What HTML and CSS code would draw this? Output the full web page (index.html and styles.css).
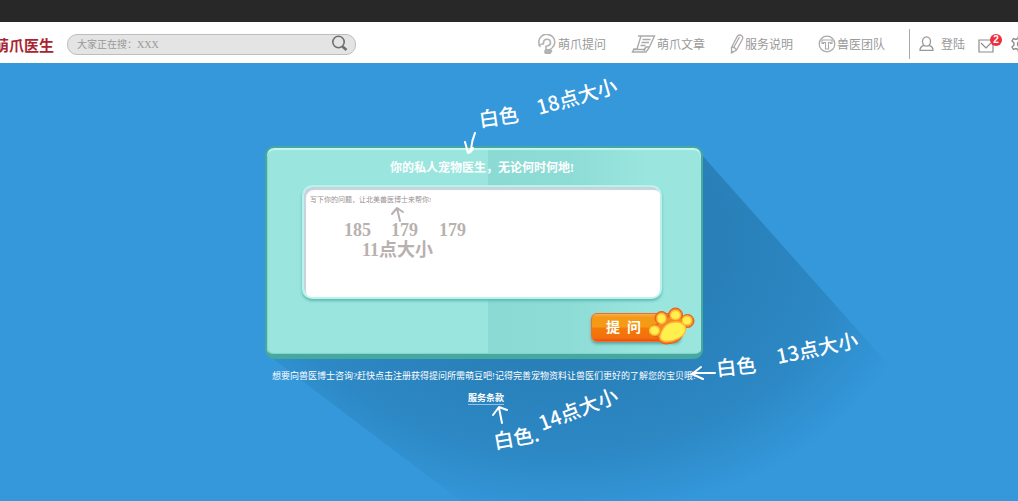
FILE: index.html
```html
<!DOCTYPE html>
<html lang="zh-CN">
<head>
<meta charset="utf-8">
<title>萌爪医生</title>
<link rel="stylesheet" href="styles.css">
</head>
<body>
<div class="topbar"></div>
<header class="header">
  <a class="logo" href="#">萌爪医生</a>
  <form class="search">
    <input class="search-input" type="text" aria-label="搜索" placeholder="大家正在搜：XXX">
    <button class="search-button" type="button" aria-label="搜索">
      <svg width="18" height="18" viewBox="0 0 18 18" fill="none" stroke="#6e6e6e"><circle cx="7.5" cy="7" r="5.7" stroke-width="1.6"/><path d="M11.5 11.5L15.5 15" stroke-width="2.6"/></svg>
    </button>
  </form>
  <nav class="nav">
    <a class="nav-link" href="#">
      <svg width="20" height="21" viewBox="0 0 20 21" fill="none" stroke="#b2b2b2"><path d="M3.500 13A8 7.800 0 1 1 15 14" stroke-width="1.600"/><path d="M6.500 10V8.500a3.500 3.300 0 1 1 4.500 3.200l-2 .6V15" stroke-width="1.600"/><path d="M1.500 11.500l3.500-1.500h2M15 14l-3 2" stroke-width="1.300"/><path d="M8 15h6l1.500 2-2 3H8l-1-2z" fill="#b2b2b2" stroke="none"/></svg>
      萌爪提问</a>
    <a class="nav-link" href="#">
      <svg width="25" height="20" viewBox="0 0 25 20" fill="none" stroke="#aaa" stroke-width="1.4"><path d="M7 2h16.500L18 14l-3 4H1.500l1.500-3h3L10 2M2 15.500h11l2-2.500h3M15 13l-2 4"/><path d="M11.500 5.500h8M10.500 8.500h7.500M9.500 11.500h5"/></svg>
      萌爪文章</a>
    <a class="nav-link" href="#">
      <svg width="14" height="20" viewBox="0 0 14 20" fill="none" stroke="#aaa" stroke-width="1.3"><path d="M1.500 13.500L7.500 2q2-2 4.500 0 1.500 1.500 0 4L6.500 16l-5 3zM1.500 13.500q3-1 5 2.500M4 13L9.500 3M1.500 17l2 1"/></svg>
      服务说明</a>
    <a class="nav-link" href="#">
      <svg width="18" height="18" viewBox="0 0 18 18" fill="none"><circle cx="9" cy="9" r="7.800" stroke="#aaa" stroke-width="1.300"/><path d="M4 5h10v3.500h-1.500V7.500h-2V14h-3V7.500h-2v1H4z" stroke="#aaa" stroke-width="1.100"/></svg>
      兽医团队</a>
  </nav>
  <div class="tools">
    <a class="login" href="#">
      <svg width="15" height="16" viewBox="0 0 15 16" fill="none" stroke="#999" stroke-width="1.300"><ellipse cx="7.500" cy="5.500" rx="4" ry="4.700"/><path d="M5 9.500Q1 10.500 1 14.300h13Q14 10.500 10 9.500"/></svg>
      登陆</a>
    <a class="mail" href="#" aria-label="消息">
      <svg width="16" height="14" viewBox="0 0 16 14" fill="none" stroke="#8c8c8c" stroke-width="1.200"><path d="M1 1h14v12H1zM3 4l5 5 5-5"/></svg>
      <span class="badge">2</span>
    </a>
    <a class="settings" href="#" aria-label="设置">
      <svg width="18" height="18" viewBox="0 0 18 18" fill="none" stroke="#8c8c8c" stroke-width="1.400"><path d="M7.500 1h3l.5 2.500 2 1 2.500-1L17 6l-2 2v2l2 2-1.500 2.500-2.500-1-2 1-.5 2.500h-3L7 14.500l-2-1-2.500 1L1 12l2-2V8L1 6l1.500-2.500 2.500 1 2-1z"/><circle cx="9" cy="9" r="2.500"/></svg>
    </a>
  </div>
</header>
<main class="main">
  <div class="stage">
    <svg class="overlay" viewBox="0 0 438 212" aria-hidden="true">
      <defs>
        <radialGradient id="shade" gradientUnits="userSpaceOnUse" cx="0" cy="0" r="1" gradientTransform="translate(295 94) scale(370 280)">
          <stop offset="0.450" stop-color="#2980b9"/>
          <stop offset="0.750" stop-color="#2980b9" stop-opacity="0.700"/>
          <stop offset="1" stop-color="#2980b9" stop-opacity="0"/>
        </radialGradient>
      </defs>
      <path d="M437 9L837 459H333L3 209z" fill="url(#shade)"/>
    </svg>
    <section class="card">
      <h1 class="title">你的私人宠物医生，无论何时何地!</h1>
      <textarea class="question" aria-label="你的问题" placeholder="写下你的问题，让北美兽医博士来帮你!"></textarea>
      <button class="ask" type="button">提&nbsp;&nbsp;问
        <svg class="paw" width="50" height="40" viewBox="0 0 50 40">
          <g fill="#f58024" stroke="#e9581d" stroke-width="1"><circle cx="15.500" cy="11" r="6.500"/><circle cx="29.500" cy="8" r="7"/><circle cx="41.500" cy="14" r="6.500"/><path d="M4 23Q4 18 10 18l8-5 12-2 12 3-5 13Q35 36 20 37 12 36 12 30 5 29 4 23z"/></g>
          <path d="M10 23L16 12 30 9 41 14 35 27 22 34z" fill="#f58a24"/>
          <g fill="#fff04d" stroke="#ffbd38" stroke-width="1.300"><ellipse cx="8.500" cy="23.500" rx="5" ry="4.700"/><ellipse cx="15.500" cy="11.500" rx="4.500" ry="5"/><ellipse cx="29.500" cy="8" rx="5" ry="4.500"/><ellipse cx="41" cy="13.500" rx="4.700" ry="4.500"/><path d="M14 29Q17 19 24 16q10-3 15 3 3 8-8 13-6 3-13 2-4-1-4-5z"/></g>
        </svg>
      </button>
    </section>
    <p class="hint">想要向兽医博士咨询?赶快点击注册获得提问所需萌豆吧!记得完善宠物资料让兽医们更好的了解您的宝贝哦!</p>
    <a class="terms" href="#">服务条款</a>
    <svg class="overlay notes" viewBox="0 0 438 212">
      <g transform="translate(-265 -146)">
        <g class="note-grey">
          <text x="344" y="236">185</text>
          <text x="391" y="236">179</text>
          <text x="439" y="236">179</text>
          <text x="362" y="256">11点大小</text>
        </g>
        <path class="arrow arrow-grey" d="M400 221L397 208M392 214l5-6 6 4"/>
        <g class="note-white">
          <text transform="translate(480 127) rotate(-8)">白色</text>
          <text transform="translate(539 115) rotate(-16)">18点大小</text>
          <text transform="translate(717 376) rotate(-6)">白色</text>
          <text transform="translate(778 364) rotate(-12)">13点大小</text>
          <text transform="translate(495 449) rotate(-10)">白色.</text>
          <text transform="translate(542 431) rotate(-21)">14点大小</text>
        </g>
        <path class="arrow" d="M475 133q-3 7-4 16l-3 4-3-11M468 153q4-1 5-5M715 373H693M701 367l-9 7 11 5M502 423l-3-15M493 415l6-8 8 3"/>
      </g>
    </svg>
  </div>
</main>
</body>
</html>
```

FILE: styles.css
```css
* {
  box-sizing: border-box;
}

body {
  margin: 0;
  min-height: 100vh;
  display: flex;
  flex-direction: column;
  overflow: hidden;
  font-family: "Liberation Serif", "Noto Sans CJK SC", serif;
  background: #fff;
}

a {
  color: inherit;
  text-decoration: none;
}

svg {
  flex: none;
}

.topbar {
  height: 22px;
  background: #282828;
}

.header {
  display: flex;
  align-items: center;
  height: 41px;
  padding-top: 3px;
  overflow: hidden;
  white-space: nowrap;
}

.logo {
  margin-left: -6px;
  font-size: 15px;
  font-weight: 700;
  color: #a9242f;
}

.search {
  display: flex;
  align-items: center;
  width: 289px;
  height: 21px;
  margin-left: 13px;
  padding: 0 6px 0 9px;
  border: 1px solid #bdbdbd;
  border-radius: 10px;
  background: #e4e4e4;
}

.search-input {
  flex: 1;
  min-width: 0;
  padding: 0;
  border: 0;
  background: none;
  font: 10px "Liberation Serif", "Noto Sans CJK SC", serif;
  outline: 0;
}

.search-input::placeholder {
  color: #999;
}

.search-button {
  display: flex;
  padding: 0;
  border: 0;
  background: none;
}

.nav {
  display: flex;
  gap: 25px;
  margin-left: auto;
  font-size: 12px;
  color: #999;
}

.nav-link,
.login {
  display: flex;
  align-items: center;
  gap: 1px;
}

.tools {
  display: flex;
  align-items: center;
  height: 30px;
  margin: 0 -11px 0 24px;
  padding-left: 9px;
  border-left: 1px solid #aaa;
  font-size: 12px;
  color: #999;
}

.login {
  gap: 7px;
}

.mail {
  position: relative;
  display: flex;
  margin: 4px 17px 0 13px;
}

.badge {
  position: absolute;
  left: 12px;
  top: -5px;
  width: 12px;
  height: 12px;
  border-radius: 50%;
  background: #ee2e3c;
  color: #fff;
  font: bold 10px/12px "Liberation Sans", sans-serif;
  text-align: center;
}

.settings {
  display: flex;
}

.main {
  flex: 1;
  display: flex;
  justify-content: center;
  align-items: flex-start;
  padding: 83px 50px 60px 0;
  overflow: hidden;
  background: #3498db;
}

.stage {
  position: relative;
  display: flex;
  flex-direction: column;
  align-items: center;
  width: 438px;
}

.overlay {
  position: absolute;
  left: 0;
  top: 0;
  width: 438px;
  height: 212px;
  overflow: visible;
  pointer-events: none;
}

.card {
  position: relative;
  display: flex;
  flex-direction: column;
  align-items: flex-start;
  width: 100%;
  padding: 11px 6px 12px 35px;
  border: 2px solid #46a89f;
  border-bottom-width: 5px;
  border-radius: 9px;
  background: linear-gradient(90deg, #9ae6df 51%, #8bdad4 51%, #8edcd6 70%, #9ae6df 88%);
  box-shadow: inset 0 2px 1px #c5f6f1, inset 1px -1px 1px #82d3cb;
}

.title {
  width: 360px;
  margin: 0;
  font-size: 12px;
  line-height: 18px;
  font-weight: 700;
  text-align: center;
  color: #fff;
}

.question {
  display: block;
  width: 360px;
  height: 114px;
  margin: 8px 0;
  padding: 8px 6px;
  border: 2px solid #baf2ed;
  border-radius: 10px;
  background: #fff;
  box-shadow: inset 2px 3px 1px #c5d3dc, 0 2px 3px #5fb9b2;
  font: 7px/10px "Liberation Serif", "Noto Sans CJK SC", serif;
  resize: none;
  outline: 0;
}

.question::placeholder {
  color: #999090;
}

.ask {
  position: relative;
  align-self: flex-end;
  width: 90px;
  height: 29px;
  margin: 6px 14px 0 0;
  padding: 0 0 0 14px;
  border: 1px solid #f0702a;
  border-radius: 6px;
  background: linear-gradient(#f8b04c 0, #f59a16 12%, #f59a16 48%, #f47a0a 52%, #f3700c 88%, #e84e1a 100%);
  box-shadow: 0 2px 3px #5aa8a0;
  color: #fff;
  font: bold 14px/26px "Liberation Serif", "Noto Sans CJK SC", serif;
  text-align: left;
}

.paw {
  position: absolute;
  right: -16px;
  top: -7px;
}

.hint {
  position: relative;
  margin: 10px 0 0;
  font-size: 9px;
  line-height: 14px;
  color: #fff;
  white-space: nowrap;
}

.terms {
  position: relative;
  margin: 9px 0 0 4px;
  border-bottom: 1px solid #8fc4e8;
  font-size: 9px;
  line-height: 12px;
  font-weight: 700;
  color: #fff;
}

.note-grey {
  font-size: 18px;
  font-weight: 700;
  fill: #b9b0b0;
}

.note-white {
  font-family: "Noto Sans CJK SC", sans-serif;
  font-size: 20px;
  font-weight: 500;
  fill: #fff;
}

.arrow {
  fill: none;
  stroke: #fff;
  stroke-width: 2;
  stroke-linecap: round;
  stroke-linejoin: round;
}

.arrow-grey {
  stroke: #b9b0b0;
}
```
